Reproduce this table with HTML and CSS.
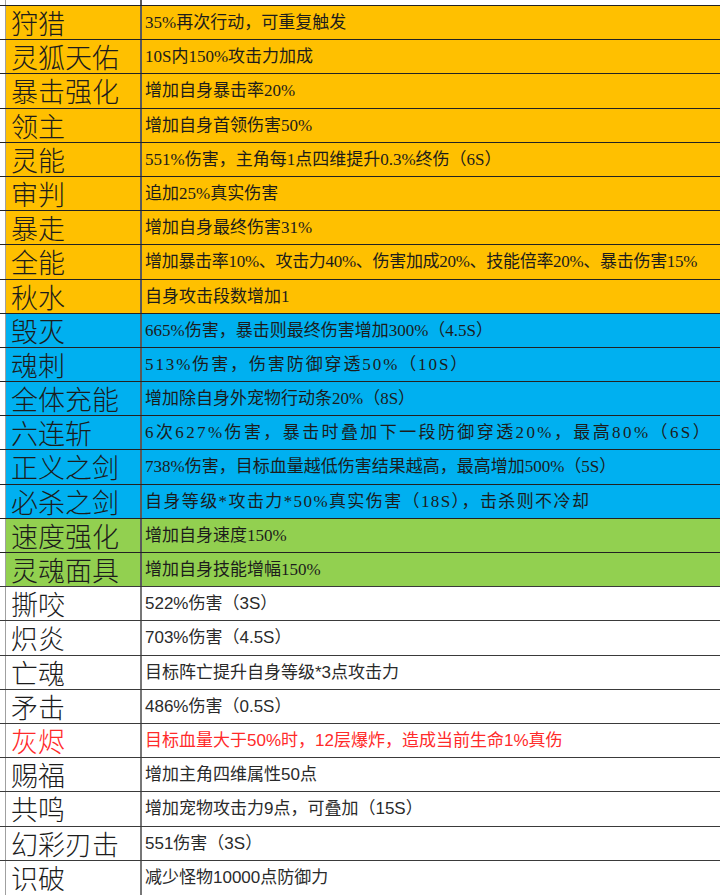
FILE: index.html
```html
<!DOCTYPE html>
<html lang="zh-CN">
<head>
<meta charset="utf-8">
<title>技能表</title>
<link rel="stylesheet" href="styles.css">
</head>
<body>
<div class="sheet">
  <div class="row top"><div class="strip"></div><div class="name"></div><div class="desc"></div></div>

  <div class="row orange"><div class="strip"></div><div class="name">狩猎</div><div class="desc">35%再次行动，可重复触发</div></div>
  <div class="row orange"><div class="strip"></div><div class="name">灵狐天佑</div><div class="desc">10S内150%攻击力加成</div></div>
  <div class="row orange tall"><div class="strip"></div><div class="name">暴击强化</div><div class="desc">增加自身暴击率20%</div></div>
  <div class="row orange"><div class="strip"></div><div class="name">领主</div><div class="desc">增加自身首领伤害50%</div></div>
  <div class="row orange"><div class="strip"></div><div class="name">灵能</div><div class="desc">551%伤害，主角每1点四维提升0.3%终伤（6S）</div></div>
  <div class="row orange"><div class="strip"></div><div class="name">审判</div><div class="desc">追加25%真实伤害</div></div>
  <div class="row orange"><div class="strip"></div><div class="name">暴走</div><div class="desc">增加自身最终伤害31%</div></div>
  <div class="row orange tall"><div class="strip"></div><div class="name">全能</div><div class="desc narrow">增加暴击率10%、攻击力40%、伤害加成20%、技能倍率20%、暴击伤害15%</div></div>
  <div class="row orange"><div class="strip"></div><div class="name">秋水</div><div class="desc">自身攻击段数增加1</div></div>

  <div class="row blue"><div class="strip"></div><div class="name">毁灭</div><div class="desc">665%伤害，暴击则最终伤害增加300%（4.5S）</div></div>
  <div class="row blue"><div class="strip"></div><div class="name">魂刺</div><div class="desc looser">513%伤害，伤害防御穿透50%（10S）</div></div>
  <div class="row blue"><div class="strip"></div><div class="name">全体充能</div><div class="desc">增加除自身外宠物行动条20%（8S）</div></div>
  <div class="row blue"><div class="strip"></div><div class="name">六连斩</div><div class="desc wide">6次627%伤害，暴击时叠加下一段防御穿透20%，最高80%（6S）</div></div>
  <div class="row blue tall"><div class="strip"></div><div class="name">正义之剑</div><div class="desc">738%伤害，目标血量越低伤害结果越高，最高增加500%（5S）</div></div>
  <div class="row blue"><div class="strip"></div><div class="name">必杀之剑</div><div class="desc loose">自身等级*攻击力*50%真实伤害（18S），击杀则不冷却</div></div>

  <div class="row green"><div class="strip"></div><div class="name">速度强化</div><div class="desc">增加自身速度150%</div></div>
  <div class="row green"><div class="strip"></div><div class="name">灵魂面具</div><div class="desc">增加自身技能增幅150%</div></div>

  <div class="row plain"><div class="strip"></div><div class="name">撕咬</div><div class="desc">522%伤害（3S）</div></div>
  <div class="row plain tall"><div class="strip"></div><div class="name">炽炎</div><div class="desc">703%伤害（4.5S）</div></div>
  <div class="row plain"><div class="strip"></div><div class="name">亡魂</div><div class="desc">目标阵亡提升自身等级*3点攻击力</div></div>
  <div class="row plain"><div class="strip"></div><div class="name">矛击</div><div class="desc">486%伤害（0.5S）</div></div>
  <div class="row plain red"><div class="strip"></div><div class="name">灰烬</div><div class="desc">目标血量大于50%时，12层爆炸，造成当前生命1%真伤</div></div>
  <div class="row plain"><div class="strip"></div><div class="name">赐福</div><div class="desc">增加主角四维属性50点</div></div>
  <div class="row plain tall"><div class="strip"></div><div class="name">共鸣</div><div class="desc">增加宠物攻击力9点，可叠加（15S）</div></div>
  <div class="row plain"><div class="strip"></div><div class="name">幻彩刃击</div><div class="desc">551伤害（3S）</div></div>
  <div class="row plain last"><div class="strip"></div><div class="name">识破</div><div class="desc">减少怪物10000点防御力</div></div>
</div>
</body>
</html>
```

FILE: styles.css
```css
html, body {
  margin: 0;
  padding: 0;
  background: #ffffff;
}

.sheet {
  display: flex;
  flex-direction: column;
  width: 720px;
}

.row {
  display: grid;
  grid-template-columns: 6px 136px 1fr;
  height: 34px;
  box-sizing: border-box;
  border-top: 1px solid #222222;
  color: #1c1c1c;
}

.row.tall {
  height: 35px;
}

.row.top {
  height: 5px;
  border-top: none;
}

.row.last {
  height: 35px;
  border-bottom: 1px solid #333333;
}

.strip {
  background: #ffffff;
  border-right: 1px solid #a0a0a0;
}

.name {
  box-sizing: border-box;
  border-right: 2px solid #5a5a5a;
  padding: 0 0 0 5px;
  font-family: "Noto Sans CJK SC", sans-serif;
  font-weight: 300;
  font-size: 27px;
  line-height: 34px;
  white-space: nowrap;
}

.desc {
  box-sizing: border-box;
  padding: 0 0 0 3px;
  font-family: "Liberation Serif", "Noto Sans CJK SC", serif;
  font-size: 17px;
  line-height: 33px;
  white-space: nowrap;
}

.desc.narrow {
  letter-spacing: -0.3px;
}

.desc.loose {
  letter-spacing: 1.4px;
}

.desc.looser {
  letter-spacing: 1.9px;
}

.desc.wide {
  letter-spacing: 2.4px;
}

.orange .name, .orange .desc { background: #ffc000; }
.blue .name, .blue .desc { background: #00b0f0; }
.green .name, .green .desc { background: #92d050; }

.plain {
  border-top-color: #3a3a3a;
}

.plain .name, .plain .desc {
  background: #ffffff;
}

.plain .name {
  border-right-color: #777777;
}

.plain .desc {
  font-family: "Liberation Sans", "Noto Sans CJK SC", sans-serif;
  color: #2a2a2a;
}

.red .name, .red .desc {
  color: #ff2a2a;
}
```
